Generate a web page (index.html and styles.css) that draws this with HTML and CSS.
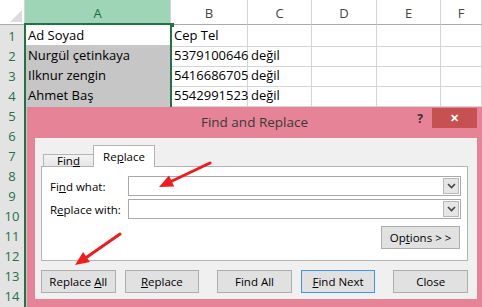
FILE: index.html
```html
<!DOCTYPE html>
<html lang="tr">
<head>
    <meta charset="UTF-8">
    <title>Find and Replace</title>
    <link rel="stylesheet" href="styles.css">
</head>
<body>
    <div class="sheet">
        <div class="row head">
            <div class="cell corner"></div>
            <div class="cell ch on">A</div>
            <div class="cell ch">B</div>
            <div class="cell ch">C</div>
            <div class="cell ch">D</div>
            <div class="cell ch">E</div>
            <div class="cell ch">F</div>
        </div>
        <div class="row">
            <div class="cell rh">1</div>
            <div class="cell">Ad Soyad</div>
            <div class="cell">Cep Tel</div>
            <div class="cell"></div><div class="cell"></div><div class="cell"></div><div class="cell"></div>
        </div>
        <div class="row">
            <div class="cell rh">2</div>
            <div class="cell picked">Nurgül çetinkaya</div>
            <div class="cell">5379100646</div>
            <div class="cell">değil</div><div class="cell"></div><div class="cell"></div><div class="cell"></div>
        </div>
        <div class="row">
            <div class="cell rh">3</div>
            <div class="cell picked">Ilknur zengin</div>
            <div class="cell">5416686705</div>
            <div class="cell">değil</div><div class="cell"></div><div class="cell"></div><div class="cell"></div>
        </div>
        <div class="row">
            <div class="cell rh">4</div>
            <div class="cell picked">Ahmet Baş</div>
            <div class="cell">5542991523</div>
            <div class="cell">değil</div><div class="cell"></div><div class="cell"></div><div class="cell"></div>
        </div>
        <div class="row"><div class="cell rh">5</div><div class="cell picked"></div><div class="cell"></div><div class="cell"></div><div class="cell"></div><div class="cell"></div><div class="cell"></div></div>
        <div class="row"><div class="cell rh">6</div><div class="cell picked"></div><div class="cell"></div><div class="cell"></div><div class="cell"></div><div class="cell"></div><div class="cell"></div></div>
        <div class="row"><div class="cell rh">7</div><div class="cell picked"></div><div class="cell"></div><div class="cell"></div><div class="cell"></div><div class="cell"></div><div class="cell"></div></div>
        <div class="row"><div class="cell rh">8</div><div class="cell picked"></div><div class="cell"></div><div class="cell"></div><div class="cell"></div><div class="cell"></div><div class="cell"></div></div>
        <div class="row"><div class="cell rh">9</div><div class="cell picked"></div><div class="cell"></div><div class="cell"></div><div class="cell"></div><div class="cell"></div><div class="cell"></div></div>
        <div class="row"><div class="cell rh">10</div><div class="cell picked"></div><div class="cell"></div><div class="cell"></div><div class="cell"></div><div class="cell"></div><div class="cell"></div></div>
        <div class="row"><div class="cell rh">11</div><div class="cell picked"></div><div class="cell"></div><div class="cell"></div><div class="cell"></div><div class="cell"></div><div class="cell"></div></div>
        <div class="row"><div class="cell rh">12</div><div class="cell picked"></div><div class="cell"></div><div class="cell"></div><div class="cell"></div><div class="cell"></div><div class="cell"></div></div>
        <div class="row"><div class="cell rh">13</div><div class="cell picked"></div><div class="cell"></div><div class="cell"></div><div class="cell"></div><div class="cell"></div><div class="cell"></div></div>
        <div class="row"><div class="cell rh">14</div><div class="cell picked"></div><div class="cell"></div><div class="cell"></div><div class="cell"></div><div class="cell"></div><div class="cell"></div></div>
        <div class="row"><div class="cell rh"></div><div class="cell picked"></div><div class="cell"></div><div class="cell"></div><div class="cell"></div><div class="cell"></div><div class="cell"></div></div>
    </div>

    <!-- selection frame round column A -->
    <div class="sel"><span class="handle"></span></div>

    <div class="dialog">
        <div class="titlebar">
            Find and Replace
            <span class="help">?</span>
            <span class="close">&#x2715;</span>
        </div>
        <div class="client">
            <div class="tabs">
                <div class="tab">Fin<u>d</u></div>
                <div class="tab active">Re<u>p</u>lace</div>
            </div>
            <div class="panel">
                <div class="field">
                    <label>Fi<u>n</u>d what:</label>
                    <div class="combo"><span class="drop"><svg width="9" height="6" viewBox="0 0 9 6"><polyline points="1,1 4.5,4.5 8,1" fill="none" stroke="#444" stroke-width="1.6"/></svg></span></div>
                </div>
                <div class="field">
                    <label>R<u>e</u>place with:</label>
                    <div class="combo"><span class="drop"><svg width="9" height="6" viewBox="0 0 9 6"><polyline points="1,1 4.5,4.5 8,1" fill="none" stroke="#444" stroke-width="1.6"/></svg></span></div>
                </div>
                <div class="opt-row">
                    <button class="btn options">Op<u>t</u>ions &gt; &gt;</button>
                </div>
            </div>
            <div class="actions">
                <button class="btn">Replace <u>A</u>ll</button>
                <button class="btn near"><u>R</u>eplace</button>
                <button class="btn far">Find All</button>
                <button class="btn near default"><u>F</u>ind Next</button>
                <button class="btn far">Close</button>
            </div>
        </div>
    </div>

    <svg class="arrows" width="482" height="307" viewBox="0 0 482 307">
        <line x1="210" y1="163" x2="172" y2="181" stroke="#ee1c1c" stroke-width="3" stroke-linecap="round"/>
        <polygon points="159,187 169,175.6 174.2,186.5" fill="#ee1c1c"/>
        <line x1="120" y1="234" x2="87" y2="257" stroke="#ee1c1c" stroke-width="3" stroke-linecap="round"/>
        <polygon points="75,265 83.1,252.1 89.9,261.9" fill="#ee1c1c"/>
    </svg>
</body>
</html>
```

FILE: styles.css
```css
body {
    margin: 0;
    width: 482px;
    height: 307px;
    overflow: hidden;
    position: relative;
    background-color: white;
    font-family: "Open Sans", sans-serif;
}
.row {
    display: grid;
    grid-template-columns: 25px 146px 77px 64px 65px 64px 41px;
    height: 20px;
}
.row.head {
    height: 25px;
}
.cell {
    box-sizing: border-box;
    border-right: 1px solid #d4d4d4;
    border-bottom: 1px solid #d4d4d4;
    font-size: 13px;
    line-height: 20px;
    padding-left: 3px;
    white-space: nowrap;
    color: #000;
}
.cell.picked {
    background-color: #c6c6c6;
    border-color: #b4b4b4;
}
.corner {
    position: relative;
    border-bottom-color: #ababab;
}
.corner::after {
    content: "";
    position: absolute;
    right: 2px;
    bottom: 2px;
    border-style: solid;
    border-width: 0 0 12px 12px;
    border-color: transparent transparent #dcdcdc transparent;
}
.ch {
    text-align: center;
    padding: 2px 0 0;
    color: #444;
    line-height: 22px;
    border-bottom-color: #ababab;
}
.ch.on {
    background-color: #9fd5b7;
    color: #1d6b40;
}
.rh {
    background-color: #e3e3e3;
    color: #217346;
    text-align: center;
    padding: 1px 0 0;
    border-bottom-color: #c4c4c4;
    border-right-color: #c4c4c4;
}
.sel {
    position: absolute;
    left: 24px;
    top: 23px;
    width: 148px;
    height: 300px;
    box-sizing: border-box;
    border: 2px solid #217346;
}
.handle {
    position: absolute;
    right: -4px;
    top: -2px;
    width: 4px;
    height: 4px;
    background-color: #217346;
}

/* dialog */
.dialog {
    position: absolute;
    left: 27px;
    top: 107px;
    width: 455px;
    height: 200px;
    background-color: #e68396;
    display: flex;
    flex-direction: column;
}
.titlebar {
    position: relative;
    height: 31px;
    line-height: 31px;
    text-align: center;
    font-size: 13.5px;
    color: #3a3a3a;
}
.help {
    position: absolute;
    right: 59px;
    top: -4px;
    font-size: 12px;
    font-weight: bold;
    color: #333;
}
.close {
    position: absolute;
    right: 5px;
    top: 1px;
    width: 45px;
    height: 20px;
    line-height: 20px;
    background-color: #c75050;
    color: white;
    font-size: 11px;
    font-weight: bold;
}
.client {
    flex: 1;
    margin: 0 5px 8px 8px;
    padding: 7px 9px 0 6px;
    background-color: #f0f0f0;
}
.tabs {
    display: flex;
    align-items: flex-end;
    height: 22px;
    padding-left: 2px;
    margin-bottom: -1px;
    position: relative;
    z-index: 1;
}
.tab {
    box-sizing: border-box;
    width: 51px;
    height: 12px;
    margin-bottom: 1px;
    border: 1px solid #b4b4b4;
    border-bottom: none;
    background: linear-gradient(#f3f3f3, #e6e6e6);
    font-size: 11.5px;
    line-height: 11px;
    text-align: center;
}
.tab.active {
    width: 62px;
    height: 22px;
    margin-bottom: 0;
    margin-left: -1px;
    background: white;
    line-height: 21px;
}
.panel {
    box-sizing: border-box;
    height: 95px;
    padding: 9px 6px 0 8px;
    border: 1px solid #b4b4b4;
    background-color: white;
}
.field {
    display: flex;
    align-items: center;
    height: 20px;
    margin-bottom: 3px;
}
.field label {
    width: 78px;
    font-size: 11.5px;
    color: #000;
}
.combo {
    flex: 1;
    height: 20px;
    box-sizing: border-box;
    border: 1px solid #a9a9a9;
    position: relative;
}
.drop {
    position: absolute;
    right: 1px;
    top: 1px;
    bottom: 1px;
    width: 16px;
    box-sizing: border-box;
    border: 1px solid #b8b8b8;
    background-color: #e6e6e6;
    display: flex;
    align-items: center;
    justify-content: center;
}
.opt-row {
    display: flex;
    justify-content: flex-end;
    margin-top: 7px;
    padding-right: 1px;
}
.btn {
    box-sizing: border-box;
    width: 75px;
    height: 23px;
    padding: 0;
    border: 1px solid #adadad;
    background-color: #e1e1e1;
    font-family: "Open Sans", sans-serif;
    font-size: 11.5px;
    color: #000;
}
.btn.options {
    width: 79px;
}
.btn.default {
    border-color: #3c97e8;
}
.actions {
    display: flex;
    margin-top: 9px;
}
.near {
    margin-left: 9px;
}
.far {
    margin-left: 18px;
}
.arrows {
    position: absolute;
    left: 0;
    top: 0;
    pointer-events: none;
}
```
